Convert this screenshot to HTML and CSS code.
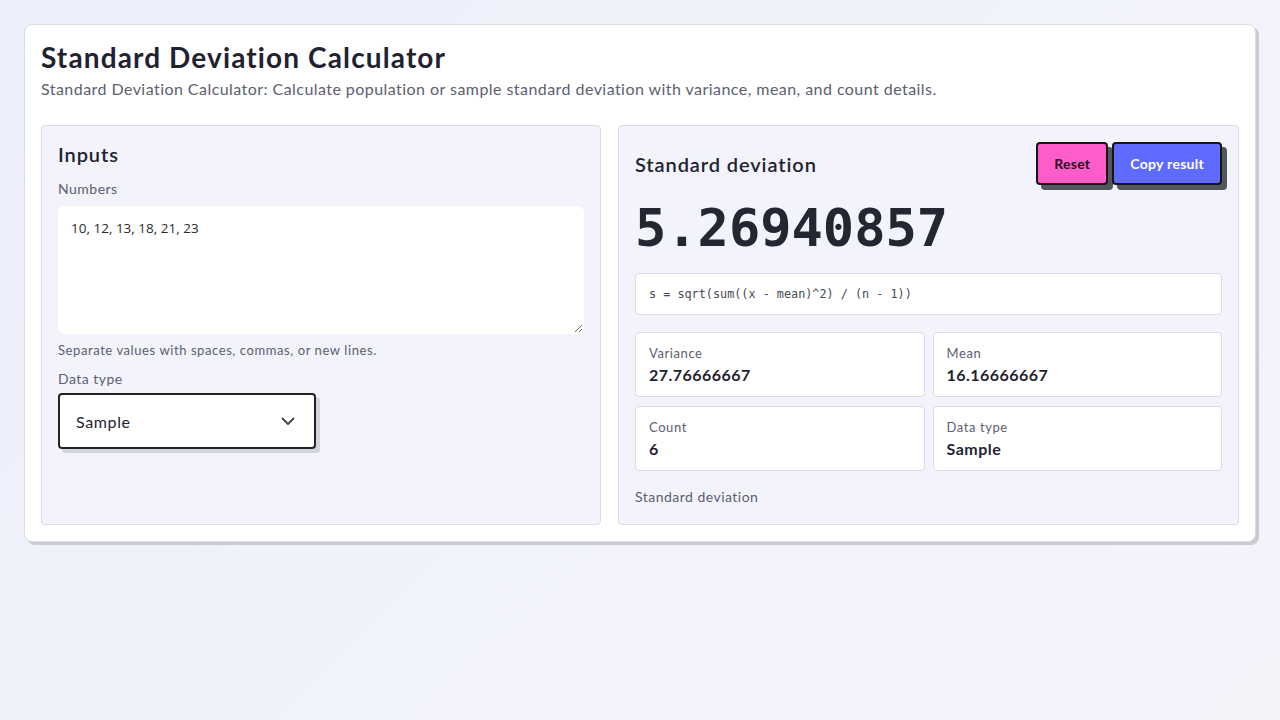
FILE: index.html
```html
<!DOCTYPE html>
<html lang="en">
<head>
    <meta charset="UTF-8">
    <meta name="viewport" content="width=device-width, initial-scale=1.0">
    <title>Standard Deviation Calculator</title>
    <link rel="stylesheet" href="styles.css">
</head>
<body>
    <main class="calc-card">
        <header class="calc-header">
            <h1 class="calc-title">Standard Deviation Calculator</h1>
            <p class="calc-subtitle">Standard Deviation Calculator: Calculate population or sample standard deviation with variance, mean, and count details.</p>
        </header>

        <div class="calc-grid">
            <section class="panel">
                <h2 class="panel-title">Inputs</h2>
                <label class="field-label" for="numbers">Numbers</label>
                <textarea class="numbers-input" id="numbers">10, 12, 13, 18, 21, 23</textarea>
                <p class="field-hint">Separate values with spaces, commas, or new lines.</p>

                <label class="field-label" for="dataType">Data type</label>
                <div class="select-wrap">
                    <select class="type-select" id="dataType">
                        <option>Sample</option>
                        <option>Population</option>
                    </select>
                    <svg class="select-arrow" width="16" height="16" viewBox="0 0 16 16" fill="none">
                        <path d="M2.5 5.5 8 11l5.5-5.5" stroke="#444" stroke-width="1.8" stroke-linecap="round" stroke-linejoin="round"/>
                    </svg>
                </div>
            </section>

            <section class="panel">
                <div class="result-head">
                    <h2 class="panel-title">Standard deviation</h2>
                    <div class="actions">
                        <button class="btn btn-reset" type="button">Reset</button>
                        <button class="btn btn-copy" type="button">Copy result</button>
                    </div>
                </div>

                <div class="result-value">5.26940857</div>

                <div class="formula">s = sqrt(sum((x - mean)^2) / (n - 1))</div>

                <div class="stats">
                    <div class="stat">
                        <div class="stat-label">Variance</div>
                        <div class="stat-value">27.76666667</div>
                    </div>
                    <div class="stat">
                        <div class="stat-label">Mean</div>
                        <div class="stat-value">16.16666667</div>
                    </div>
                    <div class="stat">
                        <div class="stat-label">Count</div>
                        <div class="stat-value">6</div>
                    </div>
                    <div class="stat">
                        <div class="stat-label">Data type</div>
                        <div class="stat-value">Sample</div>
                    </div>
                </div>

                <p class="result-note">Standard deviation</p>
            </section>
        </div>
    </main>
</body>
</html>
```

FILE: styles.css
```css
:root {
    --ink: #1f2331;
    --muted: #5c6070;
    --panel-bg: #f2f3fb;
    --line: #d9dce6;
    --pink: #ff5cc9;
    --blue: #5f6bff;
    --radius: 4px;
}

* {
    box-sizing: border-box;
}

body {
    margin: 0;
    padding: 24px;
    min-height: 720px;
    font-family: 'Lato', 'Noto Sans', sans-serif;
    letter-spacing: 0.03em;
    color: var(--ink);
    background: linear-gradient(135deg, #eceefa 0%, #f2f3fb 60%, #f4f5fb 100%);
}

.calc-card {
    background: white;
    border: 1px solid #dadde6;
    border-radius: 8px;
    padding: 16px;
    box-shadow: 3px 3px 0 #c9cbd1;
}

.calc-header {
    margin-bottom: 27px;
}

.calc-title {
    margin: 0;
    font-size: 28px;
    font-weight: 700;
    line-height: 1.15;
    letter-spacing: 0.04em;
}

.calc-subtitle {
    margin: 6px 0 0;
    font-size: 16px;
    color: var(--muted);
    letter-spacing: 0.028em;
}

.calc-grid {
    display: grid;
    grid-template-columns: 560px 1fr;
    gap: 17px;
}

.panel {
    background: var(--panel-bg);
    border: 1px solid var(--line);
    border-radius: var(--radius);
    padding: 16px;
    min-height: 400px;
}

.panel-title {
    margin: 0;
    font-size: 20px;
    font-weight: 600;
    letter-spacing: 0.045em;
}

.field-label {
    display: block;
    margin: 14px 0 9px;
    font-size: 14px;
    color: var(--muted);
}

.numbers-input {
    display: block;
    width: 100%;
    height: 128px;
    padding: 12px;
    border: 1px solid #fff;
    border-radius: 6px;
    background: white;
    font-family: 'Open Sans', 'Noto Sans', sans-serif;
    font-size: 13.5px;
    letter-spacing: 0;
    color: #2b2b2b;
    resize: vertical;
}

.field-hint {
    margin: 8px 0 0;
    font-size: 13px;
    color: var(--muted);
    letter-spacing: 0.045em;
}

.field-hint + .field-label {
    margin-top: 12px;
    margin-bottom: 6px;
}

.select-wrap {
    position: relative;
    width: 258px;
}

.type-select {
    appearance: none;
    width: 100%;
    height: 56px;
    padding: 0 16px;
    border: 2px solid #222;
    border-radius: var(--radius);
    background: white;
    font-family: inherit;
    font-size: 16px;
    letter-spacing: 0.04em;
    color: var(--ink);
    box-shadow: 4px 4px 0 #d3d5dc;
}

.select-arrow {
    position: absolute;
    right: 20px;
    top: 20px;
    pointer-events: none;
}

.result-head {
    display: flex;
    justify-content: space-between;
    align-items: center;
}

.actions {
    display: flex;
    gap: 4px;
}

.btn {
    height: 43px;
    padding: 0 16px;
    border: 2px solid #151515;
    border-radius: var(--radius);
    font-family: inherit;
    font-size: 14px;
    font-weight: 700;
    letter-spacing: 0.02em;
    cursor: pointer;
    box-shadow: 5px 5px 0 #54565e;
}

.btn-reset {
    background: var(--pink);
    color: #2a0f22;
}

.btn-copy {
    background: var(--blue);
    color: white;
}

.result-value {
    margin: 14px 0 16px;
    font-family: 'DejaVu Sans Mono', 'Liberation Mono', monospace;
    font-size: 52px;
    font-weight: 700;
    line-height: 58px;
    letter-spacing: 0;
    color: #242631;
}

.formula {
    background: white;
    border: 1px solid var(--line);
    border-radius: var(--radius);
    padding: 13px 13px;
    font-family: 'DejaVu Sans Mono', monospace;
    font-size: 11.8px;
    letter-spacing: 0;
    color: #464a55;
}

.stats {
    display: grid;
    grid-template-columns: 1fr 1fr;
    gap: 9px 8px;
    margin-top: 17px;
}

.stat {
    background: white;
    border: 1px solid var(--line);
    border-radius: var(--radius);
    padding: 11px 13px;
    height: 65px;
}

.stat-label {
    font-size: 13px;
    color: var(--muted);
    line-height: 18px;
    letter-spacing: 0.045em;
}

.stat-value {
    margin-top: 3px;
    font-size: 16px;
    font-weight: 700;
    line-height: 20px;
}

.result-note {
    margin: 17px 0 0;
    font-size: 14px;
    color: var(--muted);
}
```
